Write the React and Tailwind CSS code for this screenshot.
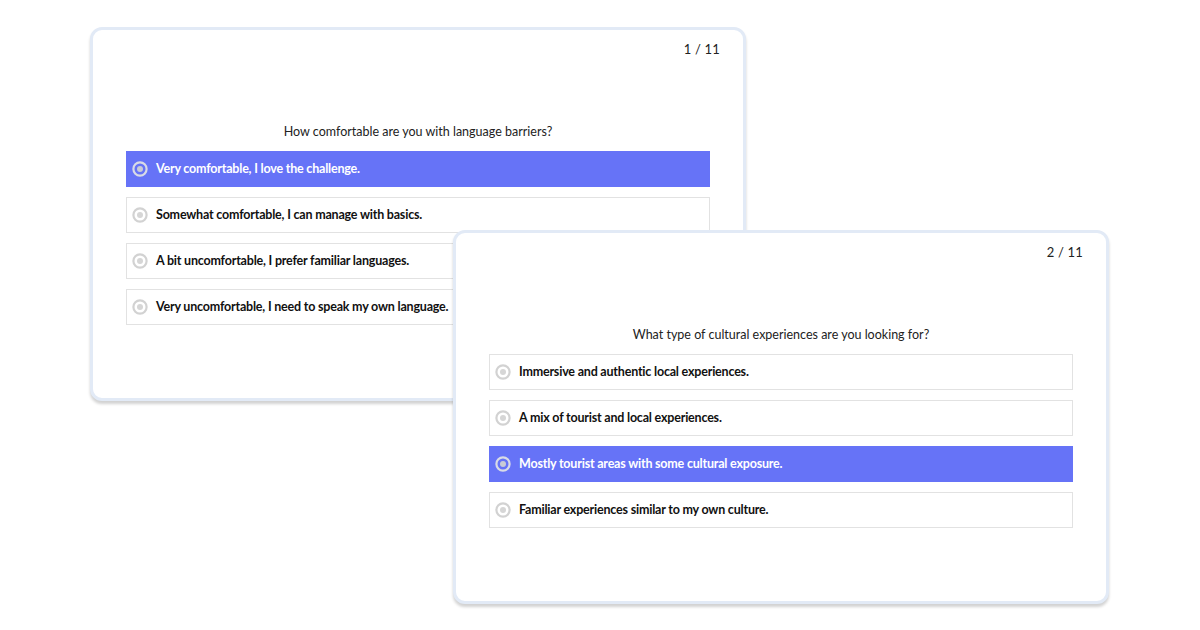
import React from "react";

function Radio({ selected }) {
  return (
    <svg width="16" height="16" viewBox="0 0 16 16" className="shrink-0">
      <circle cx="8" cy="8" r="6.6" fill="none" stroke={selected ? "#d9dbe6" : "#d2d2d2"} strokeWidth="2.2" />
      <circle cx="8" cy="8" r="3" fill={selected ? "#c9cbd6" : "#d6d6d6"} />
    </svg>
  );
}

function Card({ counter, question, options, selected, className }) {
  return (
    <div
      className={`absolute w-[656px] h-[374px] bg-white rounded-[12px] border-[3px] border-[#e2eaf6] shadow-[0_3px_3px_rgba(0,0,0,0.18)] flex flex-col px-[33px] ${className}`}
    >
      <div className="flex justify-end pt-[10px] h-[36px]">
        <span className="text-[13px] text-[#222] mr-[-10px] tracking-[0.2px]">{counter}</span>
      </div>
      <div className="h-[57px]" />
      <div className="text-center text-[12.5px] text-[#222] leading-[18px]">{question}</div>
      <div className="flex flex-col gap-[10px] mt-[10px]">
        {options.map((o, i) => {
          const sel = i === selected;
          return (
            <div
              key={i}
              className={`flex items-center gap-[8px] h-[36px] pl-[5px] border ${
                sel ? "bg-[#6673f7] border-[#6673f7] text-white" : "bg-white border-[#e2e2e2] text-[#111]"
              }`}
            >
              <Radio selected={sel} />
              <span className="text-[12.5px] font-bold tracking-[-0.2px]">{o}</span>
            </div>
          );
        })}
      </div>
    </div>
  );
}

export default function App() {
  return (
    <div
      className="relative w-[1200px] h-[630px] bg-white overflow-hidden"
      style={{ fontFamily: "'Source Sans Pro', 'Lato', 'Noto Sans', sans-serif" }}
    >
      <Card
        className="left-[90px] top-[27px]"
        counter="1 / 11"
        question="How comfortable are you with language barriers?"
        selected={0}
        options={[
          "Very comfortable, I love the challenge.",
          "Somewhat comfortable, I can manage with basics.",
          "A bit uncomfortable, I prefer familiar languages.",
          "Very uncomfortable, I need to speak my own language.",
        ]}
      />
      <Card
        className="left-[453px] top-[230px]"
        counter="2 / 11"
        question="What type of cultural experiences are you looking for?"
        selected={2}
        options={[
          "Immersive and authentic local experiences.",
          "A mix of tourist and local experiences.",
          "Mostly tourist areas with some cultural exposure.",
          "Familiar experiences similar to my own culture.",
        ]}
      />
    </div>
  );
}
